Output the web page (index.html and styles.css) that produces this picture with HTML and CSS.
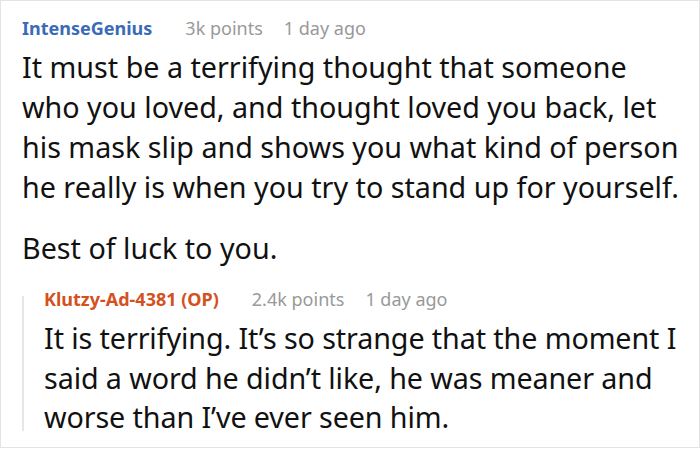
FILE: index.html
```html
<!DOCTYPE html>
<html>
<head>
<meta charset="utf-8">
<link rel="stylesheet" href="styles.css">
</head>
<body>
<div class="card">
  <div class="comment">
    <div class="meta">
      <span class="author">IntenseGenius</span>
      <span class="info">3k points</span>
      <span class="info">1 day ago</span>
    </div>
    <p class="text">It must be a terrifying thought that someone who you loved, and thought loved you back, let his mask slip and shows you what kind of person he really is when you try to stand up for yourself.</p>
    <p class="text">Best of luck to you.</p>
    <div class="reply">
      <div class="meta">
        <span class="author op">Klutzy-Ad-4381 (OP)</span>
        <span class="info">2.4k points</span>
        <span class="info">1 day ago</span>
      </div>
      <p class="text">It is terrifying. It’s so strange that the moment I said a word he didn’t like, he was meaner and worse than I’ve ever seen him.</p>
    </div>
  </div>
</div>
</body>
</html>
```
FILE: styles.css
```css
html, body {
  margin: 0;
  padding: 0;
  background: #fff;
}
.card {
  width: 698px;
  height: 446px;
  border: 1px solid #e3e3e3;
  overflow: hidden;
  font-family: "Noto Sans", "DejaVu Sans", sans-serif;
  color: #111;
}
.comment {
  padding: 15px 14px 0 21px;
}
.meta {
  display: flex;
  font-size: 18px;
  line-height: 24px;
  margin-bottom: 7px;
}
.author {
  font-weight: bold;
  color: #3a6ab8;
}
.author.op {
  color: #d4511e;
}
.info {
  color: #999;
  margin-left: 21px;
}
.author + .info {
  margin-left: 33px;
}
.text {
  margin: 0 0 21px 0;
  font-size: 28.7px;
  line-height: 40px;
}
.reply {
  position: relative;
  margin-top: -2px;
  padding-left: 22px;
}
.reply::before {
  content: "";
  position: absolute;
  left: 0;
  top: 9px;
  bottom: 6px;
  width: 2px;
  background: #e6e6e6;
}
.reply .text {
  margin: 0;
  line-height: 39.5px;
  letter-spacing: -0.1px;
}
```
